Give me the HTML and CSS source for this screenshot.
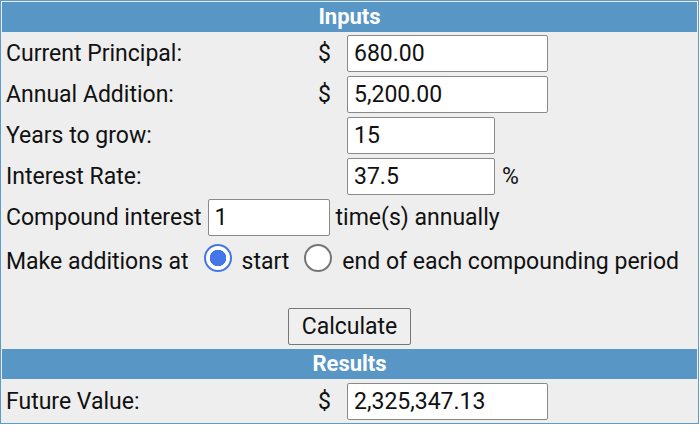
FILE: index.html
```html
<!DOCTYPE html>
<html>
<head>
<meta charset="utf-8">
<link rel="stylesheet" href="styles.css">
</head>
<body>
<div class="box">
  <div class="head">Inputs</div>
  <div class="grid">
    <div class="label">Current Principal:</div><div class="cur">$</div><div class="field"><input class="inp wide" value="680.00"></div>
    <div class="label">Annual Addition:</div><div class="cur">$</div><div class="field"><input class="inp wide" value="5,200.00"></div>
    <div class="label">Years to grow:</div><div class="cur"></div><div class="field"><input class="inp mid" value="15"></div>
    <div class="label">Interest Rate:</div><div class="cur"></div><div class="field"><input class="inp mid" value="37.5"><span class="pct">%</span></div>
  </div>
  <div class="line compound">
    <span>Compound interest</span><input class="inp small" value="1"><span>time(s) annually</span>
  </div>
  <div class="line radios">
    <span>Make additions at</span>
    <span class="radio on"></span><span>start</span>
    <span class="radio"></span><span>end of each compounding period</span>
  </div>
  <div class="actions"><button class="btn">Calculate</button></div>
  <div class="head">Results</div>
  <div class="grid result">
    <div class="label">Future Value:</div><div class="cur">$</div><div class="field"><input class="inp wide" value="2,325,347.13"></div>
  </div>
</div>
</body>
</html>
```

FILE: styles.css
```css
html, body {
  margin: 0;
  padding: 0;
  background: #ffffff;
}
body {
  font-family: Roboto, "Noto Sans", sans-serif;
  font-size: 23px;
  color: #111;
}
.box {
  width: 699px;
  height: 424px;
  box-sizing: border-box;
  border: 1px solid #5d9bca;
  padding: 1px;
  background: #eeeeee;
}
.head {
  background: #5896c5;
  color: #fff;
  font-weight: bold;
  font-size: 22px;
  text-align: center;
  height: 30px;
  line-height: 30px;
}
.grid {
  display: grid;
  grid-template-columns: 312px 33px 1fr;
  row-gap: 4px;
  margin-top: 3px;
  align-items: center;
}
.label {
  padding-left: 4px;
  height: 37px;
  line-height: 37px;
}
.cur {
  text-align: left;
  padding-left: 4px;
}
.field {
  display: flex;
  align-items: center;
}
.inp {
  font-family: Roboto, "Noto Sans", sans-serif;
  font-size: 23px;
  color: #111;
  height: 37px;
  box-sizing: border-box;
  border: 1px solid #8a8a8a;
  border-radius: 2px;
  background: #fff;
  padding: 0 6px;
  margin: 0;
}
.wide { width: 201px; }
.mid { width: 148px; }
.small { width: 122px; }
.pct {
  margin-left: 7px;
}
.line {
  display: flex;
  align-items: center;
  padding-left: 4px;
}
.compound {
  margin-top: 4px;
  gap: 6px;
}
.radios {
  margin-top: 7px;
  height: 36px;
}
.radio {
  display: inline-block;
  width: 28px;
  height: 28px;
  box-sizing: border-box;
  border: 2px solid #767676;
  border-radius: 50%;
  background: #fff;
  margin: 0 10px 0 15px;
  position: relative;
  top: -3px;
}
.radio.on {
  border: 2px solid #4377e8;
  background: radial-gradient(circle, #4377e8 0 8px, #fff 8.5px);
}
.actions {
  display: flex;
  justify-content: center;
  margin-top: 29px;
  margin-bottom: 4px;
}
.btn {
  font-family: Roboto, "Noto Sans", sans-serif;
  font-size: 23px;
  color: #111;
  height: 37px;
  width: 123px;
  border: 1px solid #777;
  border-radius: 2px;
  background: #efefef;
  padding: 0;
}
.result {
  margin-top: 4px;
}
```
